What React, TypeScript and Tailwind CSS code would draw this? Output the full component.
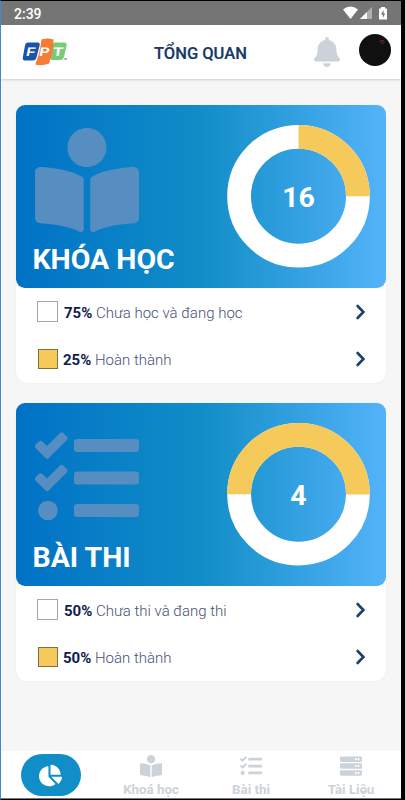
import React from "react";
import { FaBell, FaBookReader, FaChartPie, FaServer, FaTasks } from "react-icons/fa";

type Row = { percent: string; label: string; done?: boolean };

function Donut({ value, share, start }: { value: number; share: number; start: number }) {
  const r = 59.4;
  const c = 2 * Math.PI * r;
  return (
    <svg width="144" height="144" viewBox="0 0 144 144" className="block">
      <circle cx="71.5" cy="72.2" r={r} fill="none" stroke="#ffffff" strokeWidth="23.8" />
      <circle
        cx="71.5"
        cy="72.2"
        r={r}
        fill="none"
        stroke="#f6ca5a"
        strokeWidth="23.8"
        strokeDasharray={`${c * share} ${c}`}
        transform={`rotate(${start} 71.5 72.2)`}
      />
      <text x="71.5" y="83" textAnchor="middle" fill="#ffffff" fontSize="28.5" fontWeight="700">
        {value}
      </text>
    </svg>
  );
}

function Chevron() {
  return (
    <svg width="12" height="16" viewBox="0 0 12 16" fill="none" className="mr-[19px] mb-[4px] ml-auto block">
      <path d="M2.6 2 L8.4 8 L2.6 14" stroke="#1c4068" strokeWidth="2.6" strokeLinecap="round" />
    </svg>
  );
}

function Card({
  title,
  icon,
  chart,
  rows,
}: {
  title: string;
  icon: React.ReactNode;
  chart: React.ReactNode;
  rows: Row[];
}) {
  return (
    <section className="h-[278px] rounded-[10px] bg-white shadow-[0_0_1px_rgba(0,0,0,0.14)]">
      <div className="flex h-[183px] justify-between rounded-[9px] bg-[linear-gradient(90deg,#0072c6_0%,#118dc7_50%,#53b3f9_100%)] pr-[15px] pl-[17px]">
        <div className="flex flex-col pt-[23px] text-[#568ec1]">
          <div className="ml-[2px]">{icon}</div>
          <h2 className="mt-[8px] -ml-[0.5px] text-[28.5px] leading-[40px] font-bold whitespace-nowrap text-white">{title}</h2>
        </div>
        <div className="pt-[19px]">{chart}</div>
      </div>
      <div className="pt-[2px]">
        {rows.map((row) => (
          <div key={row.label} className="flex h-[47px] items-center text-[15px] text-[#101c50]">
            <span
              className={
                row.done
                  ? "mr-[5px] mb-[4px] ml-[22px] h-[20px] w-[20px] border border-[#817044] bg-[#f6ca5a]"
                  : "mr-[6px] mb-[4px] ml-[21px] h-[21px] w-[21px] border border-[#a6a6a6] bg-white"
              }
            />
            <span className="whitespace-nowrap font-light text-[#465075]">
              <b className="font-bold text-[#101c50]">{row.percent}</b> {row.label}
            </span>
            <Chevron />
          </div>
        ))}
      </div>
    </section>
  );
}

function Logo() {
  return (
    <svg width="48" height="28" viewBox="0 0 48 28" className="block" fontFamily="Liberation Sans, sans-serif" fontWeight="700">
      <path d="M6 4.5 H16 Q18.2 4.5 17.6 7.5 L14.5 19.5 Q14 22.5 10.5 22.5 H3 Q.2 22.5 .9 19 L3 7.5 Q3.6 4.5 6 4.5Z" fill="#1655a8" />
      <path d="M32 4.5 H42 Q45.3 4.5 44.6 7.5 L42 19 Q41.2 22 38 22 H30 Q28 22 28.5 19 L30.5 8 Q31 4.5 32 4.5Z" fill="#78cc78" />
      <path d="M19.5 1.5 Q25 -.5 31.5 1.5 Q31.5 14 27 25.5 Q20 28.5 13.2 26.5 Q18 15 19.5 1.5Z" fill="#f67b36" />
      <g fill="#ffffff" fontSize="12.5">
        <text x="4.4" y="18" transform="skewX(-12) translate(3 0)" textLength="9" lengthAdjust="spacingAndGlyphs">F</text>
        <text x="18" y="18" transform="skewX(-10) translate(2 0)" textLength="10" lengthAdjust="spacingAndGlyphs">P</text>
        <text x="31" y="18" transform="skewX(-8) translate(2 0)" textLength="10" lengthAdjust="spacingAndGlyphs">T</text>
      </g>
      <path d="M42 21 H45.2 M43.5 20 V22" stroke="#7aa0c8" strokeWidth="1" />
    </svg>
  );
}

export default function App() {
  return (
    <div className="flex h-[800px] w-[405px] flex-col overflow-hidden border-t border-r-4 border-b border-l border-t-black border-r-black border-b-black border-l-[#4386d9] bg-[#f6f6f6] font-['Roboto','Noto_Sans',sans-serif]">
      <div className="flex h-[24px] shrink-0 items-center bg-[#757575] pl-[13px] text-[14px] text-white">
        <span className="pt-[2px] font-medium">2:39</span>
        <svg width="46" height="14" viewBox="0 0 46 14" className="mr-[13px] ml-auto block">
          <path d="M1 3.4 Q8.5 -2.4 16 3.4 L8.5 13Z" fill="#ffffff" />
          <path d="M18 13 L30 1 V13Z" fill="#b0b0b0" />
          <path d="M18 13 L25 6 V13Z" fill="#ffffff" />
          <path d="M39 1 H43 V2.5 H45 V13.5 H37 V2.5 H39Z" fill="#ffffff" />
          <path d="M41.6 4 L39 8.5 H40.8 V12 L43.2 7.5 H41.6Z" fill="#757575" />
        </svg>
      </div>

      <header className="flex h-[54px] shrink-0 items-center bg-white shadow-[0_1px_2px_rgba(0,0,0,0.16)]">
        <div className="ml-[21px] w-[132px]">
          <Logo />
        </div>
        <h1 className="w-[158px] pt-[4px] text-[16.5px] font-medium whitespace-nowrap text-[#153963] [-webkit-text-stroke:0.2px_#153963]">TỔNG QUAN</h1>
        <FaBell size={30} className="text-[#ccd2d9]" />
        <svg width="32" height="32" viewBox="0 0 32 32" className="mb-[5px] ml-[17px] block">
          <circle cx="16" cy="16" r="16" fill="#101011" />
          <path d="M20.5 7.5 L23.5 6.5 L25.5 7.5 M22 9 H24.5" stroke="#8c2a48" strokeWidth="1" fill="none" />
        </svg>
      </header>

      <main className="flex flex-1 flex-col gap-[20px] pt-[26px] pr-[15px] pl-[15px]">
        <Card
          title="KHÓA HỌC"
          icon={<FaBookReader size={104} />}
          chart={<Donut value={16} share={0.25} start={-90} />}
          rows={[
            { percent: "75%", label: "Chưa học và đang học" },
            { percent: "25%", label: "Hoàn thành", done: true },
          ]}
        />
        <Card
          title="BÀI THI"
          icon={<FaTasks size={104} />}
          chart={<Donut value={4} share={0.5} start={-180} />}
          rows={[
            { percent: "50%", label: "Chưa thi và đang thi" },
            { percent: "50%", label: "Hoàn thành", done: true },
          ]}
        />
      </main>

      <nav className="grid h-[48px] shrink-0 grid-cols-4 border-b border-[#77777c] bg-white text-[13.3px] font-bold text-[#ccd2d9]">
        <div className="flex items-center justify-center">
          <div className="flex h-[42px] w-[60px] items-center justify-center rounded-[21px] bg-[#118dc7]">
            <FaChartPie size={23} className="mr-[2px] mt-px text-white" />
          </div>
        </div>
        <div className="flex flex-col items-center pt-[4px]">
          <FaBookReader size={22} />
          <span className="mt-[5px] leading-[15px]">Khoá học</span>
        </div>
        <div className="flex flex-col items-center pt-[4px]">
          <FaTasks size={22} />
          <span className="mt-[5px] leading-[15px]">Bài thi</span>
        </div>
        <div className="flex flex-col items-center pt-[4px]">
          <FaServer size={22} />
          <span className="mt-[5px] leading-[15px]">Tài Liệu</span>
        </div>
      </nav>
    </div>
  );
}
